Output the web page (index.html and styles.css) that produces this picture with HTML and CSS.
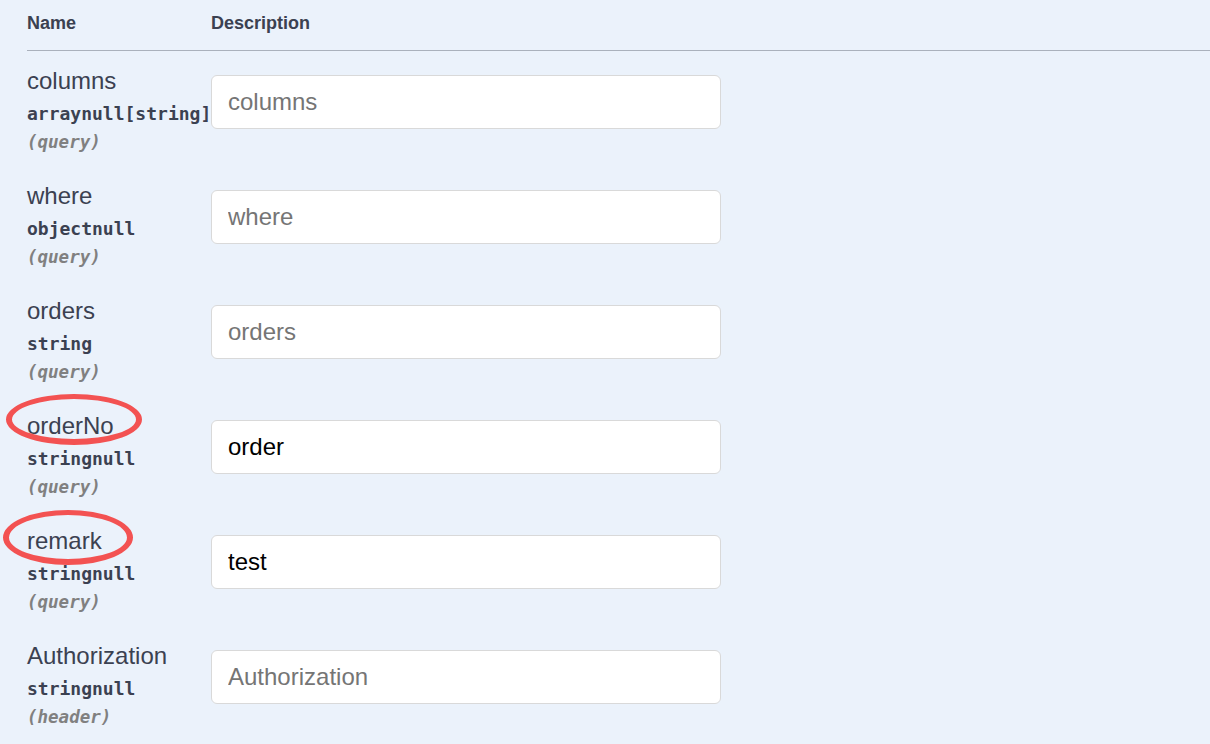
FILE: index.html
```html
<!DOCTYPE html>
<html lang="en">
<head>
<meta charset="utf-8">
<title>Parameters</title>
<link rel="stylesheet" href="styles.css">
</head>
<body>
<div class="params">
  <div class="head">
    <div class="th">Name</div>
    <div class="th">Description</div>
  </div>

  <div class="row">
    <div class="pname">
      <div class="name">columns</div>
      <div class="type">arraynull[string]</div>
      <div class="in">(query)</div>
    </div>
    <div class="desc"><input class="field" type="text" placeholder="columns"></div>
  </div>

  <div class="row">
    <div class="pname">
      <div class="name">where</div>
      <div class="type">objectnull</div>
      <div class="in">(query)</div>
    </div>
    <div class="desc"><input class="field" type="text" placeholder="where"></div>
  </div>

  <div class="row">
    <div class="pname">
      <div class="name">orders</div>
      <div class="type">string</div>
      <div class="in">(query)</div>
    </div>
    <div class="desc"><input class="field" type="text" placeholder="orders"></div>
  </div>

  <div class="row">
    <div class="pname">
      <div class="name">orderNo<span class="ring ring-a"></span></div>
      <div class="type">stringnull</div>
      <div class="in">(query)</div>
    </div>
    <div class="desc"><input class="field" type="text" placeholder="orderNo" value="order"></div>
  </div>

  <div class="row">
    <div class="pname">
      <div class="name">remark<span class="ring ring-b"></span></div>
      <div class="type">stringnull</div>
      <div class="in">(query)</div>
    </div>
    <div class="desc"><input class="field" type="text" placeholder="remark" value="test"></div>
  </div>

  <div class="row">
    <div class="pname">
      <div class="name">Authorization</div>
      <div class="type">stringnull</div>
      <div class="in">(header)</div>
    </div>
    <div class="desc"><input class="field" type="text" placeholder="Authorization"></div>
  </div>
</div>
</body>
</html>
```

FILE: styles.css
```css
html, body {
  margin: 0;
  padding: 0;
  background: #ebf2fb;
}

body {
  font-family: "Liberation Sans", Arial, sans-serif;
  color: #3b4151;
  overflow: hidden;
  height: 744px;
}

.params {
  padding-left: 27px;
}

.head {
  display: grid;
  grid-template-columns: 184px 1fr;
  padding: 11px 0 15px;
  border-bottom: 1px solid #aab1bc;
}

.th {
  font-size: 18px;
  font-weight: bold;
  line-height: 24px;
  color: #3b4151;
}

.row {
  display: grid;
  grid-template-columns: 184px 510px;
  align-items: start;
  box-sizing: border-box;
  height: 115px;
  padding-top: 14px;
}

.pname {
  display: flex;
  flex-direction: column;
}

.name {
  position: relative;
  font-size: 24px;
  line-height: 32px;
  color: #3b4151;
  white-space: nowrap;
}

.type {
  font-family: "DejaVu Sans Mono", "Liberation Mono", monospace;
  font-size: 18px;
  font-weight: bold;
  line-height: 32px;
  padding-top: 1px;
  color: #3b4151;
  white-space: nowrap;
}

.in {
  font-family: "DejaVu Sans Mono", "Liberation Mono", monospace;
  font-size: 17.5px;
  font-weight: bold;
  font-style: italic;
  line-height: 24px;
  color: #808080;
}

.desc {
  padding-top: 10px;
}

.field {
  box-sizing: border-box;
  width: 510px;
  height: 54px;
  margin: 0;
  padding: 0 16px;
  border: 1px solid #d9d9d9;
  border-radius: 6px;
  background: #fff;
  font-family: "Liberation Sans", Arial, sans-serif;
  font-size: 24px;
  color: #000;
  outline: none;
}

.field::placeholder {
  color: #757575;
}

.ring {
  position: absolute;
  box-sizing: border-box;
  border: 6px solid #f35252;
  border-top-width: 5px;
  border-radius: 50%;
  pointer-events: none;
}

.ring-a {
  left: -21px;
  top: -16px;
  width: 136px;
  height: 51px;
}

.ring-b {
  left: -24px;
  top: -15px;
  width: 130px;
  height: 55px;
}
```
